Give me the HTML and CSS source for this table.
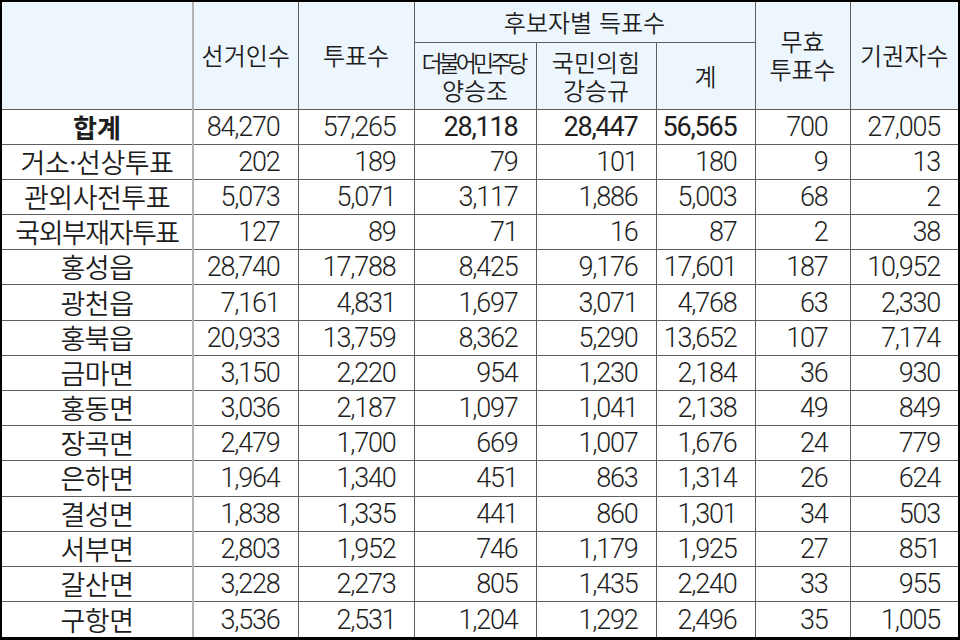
FILE: index.html
```html
<!DOCTYPE html>
<html lang="ko">
<head>
<meta charset="utf-8">
<link rel="stylesheet" href="styles.css">
</head>
<body>
<div class="frame">
<table class="votes">
<colgroup>
<col class="c1"><col class="c2"><col class="c3"><col class="c4"><col class="c5"><col class="c6"><col class="c7"><col class="c8">
</colgroup>
<thead>
<tr class="h1">
<th rowspan="2" class="first"></th>
<th rowspan="2">선거인수</th>
<th rowspan="2">투표수</th>
<th colspan="3">후보자별 득표수</th>
<th rowspan="2">무효<br>투표수</th>
<th rowspan="2">기권자수</th>
</tr>
<tr class="h2">
<th><span class="tight">더불어민주당</span><br>양승조</th>
<th>국민의힘<br>강승규</th>
<th>계</th>
</tr>
</thead>
<tbody>
<tr class="total"><td class="first">합계</td><td>84,270</td><td>57,265</td><td class="b">28,118</td><td class="b">28,447</td><td class="b">56,565</td><td class="inv">700</td><td>27,005</td></tr>
<tr><td class="first">거소·선상투표</td><td>202</td><td>189</td><td>79</td><td>101</td><td>180</td><td class="inv">9</td><td>13</td></tr>
<tr><td class="first">관외사전투표</td><td>5,073</td><td>5,071</td><td>3,117</td><td>1,886</td><td>5,003</td><td class="inv">68</td><td>2</td></tr>
<tr><td class="first narrow">국외부재자투표</td><td>127</td><td>89</td><td>71</td><td>16</td><td>87</td><td class="inv">2</td><td>38</td></tr>
<tr><td class="first">홍성읍</td><td>28,740</td><td>17,788</td><td>8,425</td><td>9,176</td><td>17,601</td><td class="inv">187</td><td>10,952</td></tr>
<tr><td class="first">광천읍</td><td>7,161</td><td>4,831</td><td>1,697</td><td>3,071</td><td>4,768</td><td class="inv">63</td><td>2,330</td></tr>
<tr><td class="first">홍북읍</td><td>20,933</td><td>13,759</td><td>8,362</td><td>5,290</td><td>13,652</td><td class="inv">107</td><td>7,174</td></tr>
<tr><td class="first">금마면</td><td>3,150</td><td>2,220</td><td>954</td><td>1,230</td><td>2,184</td><td class="inv">36</td><td>930</td></tr>
<tr><td class="first">홍동면</td><td>3,036</td><td>2,187</td><td>1,097</td><td>1,041</td><td>2,138</td><td class="inv">49</td><td>849</td></tr>
<tr><td class="first">장곡면</td><td>2,479</td><td>1,700</td><td>669</td><td>1,007</td><td>1,676</td><td class="inv">24</td><td>779</td></tr>
<tr><td class="first">은하면</td><td>1,964</td><td>1,340</td><td>451</td><td>863</td><td>1,314</td><td class="inv">26</td><td>624</td></tr>
<tr><td class="first">결성면</td><td>1,838</td><td>1,335</td><td>441</td><td>860</td><td>1,301</td><td class="inv">34</td><td>503</td></tr>
<tr><td class="first">서부면</td><td>2,803</td><td>1,952</td><td>746</td><td>1,179</td><td>1,925</td><td class="inv">27</td><td>851</td></tr>
<tr><td class="first">갈산면</td><td>3,228</td><td>2,273</td><td>805</td><td>1,435</td><td>2,240</td><td class="inv">33</td><td>955</td></tr>
<tr><td class="first">구항면</td><td>3,536</td><td>2,531</td><td>1,204</td><td>1,292</td><td>2,496</td><td class="inv">35</td><td>1,005</td></tr>
</tbody>
</table>
</div>
</body>
</html>
```

FILE: styles.css
```css
html, body {
  margin: 0;
  padding: 0;
  background: #ffffff;
}

.frame {
  width: 960px;
  height: 640px;
  box-sizing: border-box;
  border-style: solid;
  border-color: #000000;
  border-width: 2px 2px 3px 2px;
  overflow: hidden;
}

.votes {
  width: 956px;
  height: 635px;
  border-collapse: collapse;
  border-style: hidden;
  table-layout: fixed;
  font-family: "Noto Sans CJK KR", "Noto Sans", sans-serif;
  color: #1e1e1e;
}

.c1 { width: 191px; }
.c2 { width: 105px; }
.c3 { width: 116px; }
.c4 { width: 122px; }
.c5 { width: 120px; }
.c6 { width: 99px; }
.c7 { width: 95px; }
.c8 { width: 108px; }

.votes th,
.votes td {
  border: 1px solid #5e5e5e;
  padding: 0;
  white-space: nowrap;
}

.votes th {
  background: #eef6fd;
  font-weight: 350;
  font-size: 24px;
  line-height: 28px;
  text-align: center;
  vertical-align: middle;
}

.votes .first {
  border-right: 2px solid #b4b4b4;
}

.h1 { height: 40px; }
.h2 { height: 67px; }

.tight {
  font-size: 23px;
  letter-spacing: -4px;
  margin-right: 4px;
}

.votes tbody tr {
  height: 35.2px;
}

.votes td {
  font-family: Roboto, "Liberation Sans", sans-serif;
  font-size: 27px;
  font-weight: 300;
  letter-spacing: -1.2px;
  line-height: 30px;
  text-align: right;
  padding-right: 18px;
  vertical-align: middle;
}

.votes td.inv {
  padding-right: 22px;
}

.votes td.first {
  font-family: "Noto Sans CJK KR", "Noto Sans", sans-serif;
  text-align: center;
  padding-right: 0;
  font-size: 27px;
  font-weight: 350;
  letter-spacing: -0.5px;
}

.votes td.narrow {
  letter-spacing: -1.5px;
}

.votes .total td.first {
  font-weight: 700;
  font-size: 26px;
  letter-spacing: 0;
}

.votes td.b {
  font-weight: 400;
}
```
